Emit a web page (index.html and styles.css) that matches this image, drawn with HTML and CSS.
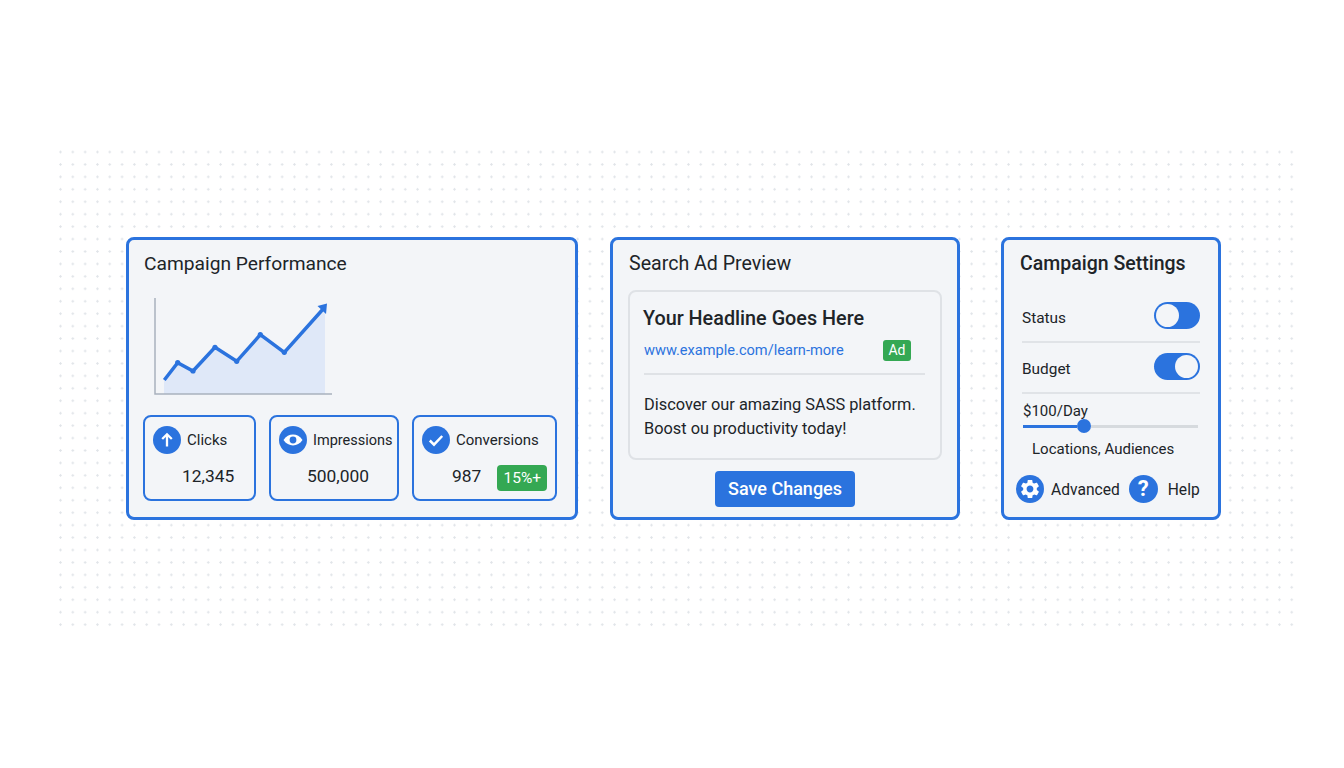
FILE: index.html
```html
<!DOCTYPE html>
<html lang="en">
<head>
    <meta charset="UTF-8">
    <meta name="viewport" content="width=device-width, initial-scale=1.0">
    <title>Campaign Dashboard</title>
    <link rel="stylesheet" href="styles.css">
</head>
<body>
    <div class="canvas">
        <div class="panels">
            <section class="panel performance">
                <h2 class="panel-title">Campaign Performance</h2>
                <svg class="chart" width="190" height="105" viewBox="0 0 190 105">
                    <polygon class="chart-area" points="14,99 14,85 27.7,67.7 43,76 65,52.3 86.7,66.3 110.3,39.7 134.3,57.3 175,12 175,99"/>
                    <polyline class="chart-axis" points="5,3 5,99 182,99"/>
                    <polyline class="chart-line" points="14.3,85 27.7,67.7 43,76 65,52.3 86.7,66.3 110.3,39.7 134.3,57.3 174,13"/>
                    <circle class="chart-dot" cx="27.7" cy="67.7" r="2.6"/>
                    <circle class="chart-dot" cx="43" cy="76" r="2.6"/>
                    <circle class="chart-dot" cx="65" cy="52.3" r="2.6"/>
                    <circle class="chart-dot" cx="86.7" cy="66.3" r="2.6"/>
                    <circle class="chart-dot" cx="110.3" cy="39.7" r="2.6"/>
                    <circle class="chart-dot" cx="134.3" cy="57.3" r="2.6"/>
                    <polygon class="chart-dot" points="177,8.5 167.5,11 176,19"/>
                </svg>
                <div class="stats">
                    <div class="stat stat-clicks">
                        <div class="stat-head">
                            <svg class="round-icon" width="28" height="28" viewBox="0 0 28 28">
                                <circle cx="14" cy="14" r="14" fill="#2b73de"/>
                                <path d="M14 20.5V8.5M9.2 13L14 8.3l4.8 4.7" fill="none" stroke="#fff" stroke-width="2.3"/>
                            </svg>
                            <span class="stat-label">Clicks</span>
                        </div>
                        <div class="stat-value value-clicks">12,345</div>
                    </div>
                    <div class="stat stat-impressions">
                        <div class="stat-head">
                            <svg class="round-icon" width="28" height="28" viewBox="0 0 28 28">
                                <circle cx="14" cy="14" r="14" fill="#2b73de"/>
                                <path d="M4.5 14C7 10.2 10.3 8.6 14 8.6s7 1.6 9.5 5.4c-2.5 3.8-5.8 5.4-9.5 5.4S7 17.8 4.5 14z" fill="#fff"/>
                                <circle cx="14" cy="14" r="3.4" fill="#2b73de"/>
                            </svg>
                            <span class="stat-label">Impressions</span>
                        </div>
                        <div class="stat-value value-impressions">500,000</div>
                    </div>
                    <div class="stat stat-conversions">
                        <div class="stat-head">
                            <svg class="round-icon" width="28" height="28" viewBox="0 0 28 28">
                                <circle cx="14" cy="14" r="14" fill="#2b73de"/>
                                <path d="M7.8 14.5l4.2 4.2 8.2-8.7" fill="none" stroke="#fff" stroke-width="2.5"/>
                            </svg>
                            <span class="stat-label">Conversions</span>
                        </div>
                        <div class="stat-foot">
                            <div class="stat-value">987</div>
                            <span class="trend-badge">15%+</span>
                        </div>
                    </div>
                </div>
            </section>

            <section class="panel preview">
                <h2 class="panel-title">Search Ad Preview</h2>
                <div class="ad-box">
                    <h3 class="ad-headline">Your Headline Goes Here</h3>
                    <div class="ad-link-row">
                        <a class="ad-link" href="#">www.example.com/learn-more</a>
                        <span class="ad-badge">Ad</span>
                    </div>
                    <p class="ad-text">Discover our amazing SASS platform.<br>Boost ou productivity today!</p>
                </div>
                <button class="save-button">Save Changes</button>
            </section>

            <section class="panel settings">
                <h2 class="panel-title">Campaign Settings</h2>
                <div class="setting-row first-row">
                    <span class="setting-label">Status</span>
                    <span class="toggle"><span class="toggle-thumb"></span></span>
                </div>
                <div class="setting-row">
                    <span class="setting-label">Budget</span>
                    <span class="toggle toggle-right"><span class="toggle-thumb"></span></span>
                </div>
                <div class="budget-value">$100/Day</div>
                <div class="slider">
                    <span class="slider-fill"></span>
                    <span class="slider-thumb"></span>
                    <span class="slider-rest"></span>
                </div>
                <div class="targeting">Locations, Audiences</div>
                <div class="settings-links">
                    <svg class="round-icon" width="28" height="28" viewBox="0 0 28 28">
                        <circle cx="14" cy="14" r="14" fill="#2b73de"/>
                        <path transform="translate(2.6 2.6) scale(.95)" fill="#fff" fill-rule="evenodd" d="M19.14 12.94c.04-.3.06-.61.06-.94 0-.32-.02-.64-.07-.94l2.03-1.58c.18-.14.23-.41.12-.61l-1.92-3.32c-.12-.22-.37-.29-.59-.22l-2.39.96c-.5-.38-1.03-.7-1.62-.94l-.36-2.54c-.04-.24-.24-.41-.48-.41h-3.84c-.24 0-.43.17-.47.41l-.36 2.54c-.59.24-1.13.57-1.62.94l-2.39-.96c-.22-.08-.47 0-.59.22L2.74 8.87c-.12.21-.08.47.12.61l2.03 1.58c-.05.3-.09.63-.09.94s.02.64.07.94l-2.03 1.58c-.18.14-.23.41-.12.61l1.92 3.32c.12.22.37.29.59.22l2.39-.96c.5.38 1.03.7 1.62.94l.36 2.54c.05.24.24.41.48.41h3.84c.24 0 .44-.17.47-.41l.36-2.54c.59-.24 1.13-.56 1.62-.94l2.39.96c.22.08.47 0 .59-.22l1.92-3.32c.12-.22.07-.47-.12-.61l-2.01-1.58zM12 15.6c-1.98 0-3.6-1.62-3.6-3.6s1.62-3.6 3.6-3.6 3.6 1.62 3.6 3.6-1.62 3.6-3.6 3.6z"/>
                    </svg>
                    <span class="link-text link-advanced">Advanced</span>
                    <span class="help-icon">?</span>
                    <span class="link-text link-help">Help</span>
                </div>
            </section>
        </div>
    </div>
</body>
</html>
```

FILE: styles.css
```css
/* General Styles */
* {
    box-sizing: border-box;
}

body {
    margin: 0;
    background-color: #fff;
    color: #202428;
    font-family: Roboto, "Liberation Sans", sans-serif;
}

/* Dotted backdrop */
.canvas {
    width: 1236px;
    height: 477px;
    margin: 150px 0 0 58px;
    padding: 87px 0 0 68px;
    background-image: radial-gradient(circle, #e0e4e8 0.9px, transparent 1.4px);
    background-size: 12.32px 12.45px;
    background-position: -3.66px -4.22px;
}

.panels {
    display: flex;
}

.panel {
    height: 283px;
    padding-top: 11px;
    background-color: #f3f5f8;
    border: 3px solid #2b73de;
    border-radius: 8px;
}

.panel-title {
    margin: 0 0 -2px;
    font-size: 19.6px;
    font-weight: 400;
    line-height: 26px;
}

/* Campaign Performance */
.performance {
    width: 452px;
    padding-left: 14px;
}

.performance .panel-title {
    margin-left: 1px;
    font-size: 19.2px;
}

.chart {
    display: block;
    margin: 20px 0 0 7px;
}

.chart-area {
    fill: #dfe8f8;
}

.chart-axis {
    fill: none;
    stroke: #a9b1bd;
    stroke-width: 1.5;
}

.chart-line {
    fill: none;
    stroke: #2b73de;
    stroke-width: 3.5;
}

.chart-dot {
    fill: #2b73de;
}

.stats {
    display: flex;
    gap: 13px;
    margin-top: 15px;
}

.stat {
    height: 86px;
    padding: 9px 0 0 8px;
    border: 2px solid #2b73de;
    border-radius: 8px;
}

.stat-clicks {
    width: 113px;
}

.stat-impressions {
    width: 130px;
}

.stat-conversions {
    width: 145px;
}

.stat-head {
    display: flex;
    align-items: center;
    gap: 6px;
}

.round-icon {
    flex: none;
}

.stat-label {
    font-size: 15px;
}

.stat-impressions .stat-label {
    font-size: 14.5px;
}

.stat-value {
    font-size: 17.4px;
    line-height: 24px;
    margin-top: 10px;
}

.value-clicks {
    margin-left: 29px;
}

.value-impressions {
    margin-left: 28px;
}

.stat-foot {
    display: flex;
    align-items: flex-start;
}

.stat-foot .stat-value {
    margin-left: 30px;
}

.trend-badge {
    width: 50px;
    height: 26px;
    margin: 11px 0 0 16px;
    background-color: #34a853;
    border-radius: 4px;
    color: #fff;
    font-size: 15.5px;
    line-height: 26px;
    text-align: center;
}

/* Search Ad Preview */
.preview {
    width: 350px;
    margin-left: 32px;
    padding: 11px 15px 0;
}

.preview .panel-title {
    margin-left: 1px;
}

.ad-box {
    height: 170px;
    margin-top: 15px;
    padding: 14px 15px 0 14px;
    border: 2px solid #dfe2e6;
    border-radius: 8px;
}

.ad-headline {
    margin: 0 0 0 -1px;
    font-size: 19.8px;
    font-weight: 500;
    line-height: 26px;
}

.ad-link-row {
    display: flex;
    align-items: center;
    justify-content: space-between;
    height: 24px;
    margin-top: 6px;
    padding-right: 14px;
}

.ad-link {
    color: #2b73de;
    font-size: 14.6px;
    text-decoration: none;
}

.ad-badge {
    width: 28px;
    height: 21px;
    background-color: #34a853;
    border-radius: 3px;
    color: #fff;
    font-size: 14px;
    line-height: 21px;
    text-align: center;
}

.ad-text {
    margin: 11px 0 0;
    padding-top: 18px;
    border-top: 2px solid #dfe2e6;
    font-size: 16.35px;
    line-height: 24px;
}

.save-button {
    display: block;
    width: 140px;
    height: 36px;
    margin: 11px auto 0;
    padding: 0 0 2px;
    background-color: #2b73de;
    border: none;
    border-radius: 4px;
    color: #fff;
    font-family: inherit;
    font-size: 18px;
    font-weight: 500;
    cursor: pointer;
}

/* Campaign Settings */
.settings {
    width: 220px;
    margin-left: 41px;
    padding: 11px 18px 0;
}

.settings .panel-title {
    margin-left: -2px;
    font-size: 19.5px;
    font-weight: 500;
}

.setting-row {
    display: flex;
    align-items: center;
    justify-content: space-between;
    padding: 10px 0 12px;
    border-bottom: 2px solid #e0e3e7;
    font-size: 15.4px;
}

.setting-label {
    margin-top: 4px;
}

.first-row {
    margin-top: 17px;
}

.toggle {
    display: flex;
    width: 46px;
    height: 27px;
    padding: 2px;
    background-color: #2b73de;
    border-radius: 14px;
}

.toggle-right {
    justify-content: flex-end;
}

.toggle-thumb {
    width: 23px;
    height: 23px;
    background-color: #f3f5f8;
    border-radius: 50%;
}

.budget-value {
    margin: 8px 0 -1px 1px;
    font-size: 15px;
    line-height: 18px;
}

.slider {
    display: flex;
    align-items: center;
    height: 14px;
    margin: 0 2px 0 1px;
}

.slider-fill {
    width: 54px;
    height: 3px;
    background-color: #2b73de;
}

.slider-thumb {
    flex: none;
    width: 14px;
    height: 14px;
    background-color: #2b73de;
    border-radius: 50%;
}

.slider-rest {
    flex: 1;
    height: 3px;
    background-color: #d6dade;
}

.targeting {
    margin: 7px 0 0 10px;
    font-size: 15px;
    line-height: 18px;
}

.settings-links {
    display: flex;
    align-items: center;
    margin: 17px -2px 0 -6px;
    font-size: 15.6px;
}

.link-text {
    padding-top: 2px;
}

.link-advanced {
    margin-left: 7px;
}

.help-icon {
    flex: none;
    width: 29px;
    height: 28px;
    margin-left: 9px;
    background-color: #2b73de;
    border-radius: 50%;
    color: #fff;
    font-size: 22px;
    font-weight: 700;
    line-height: 28px;
    text-align: center;
}

.link-help {
    margin-left: 10px;
}
```
